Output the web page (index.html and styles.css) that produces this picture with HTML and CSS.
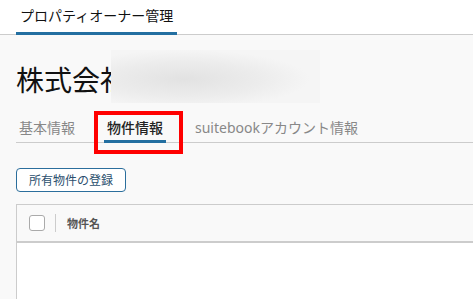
FILE: index.html
```html
<!DOCTYPE html>
<html lang="ja">
<head>
    <meta charset="UTF-8">
    <meta name="viewport" content="width=device-width, initial-scale=1.0">
    <title>プロパティオーナー管理</title>
    <link rel="stylesheet" href="styles.css">
</head>
<body>
    <div class="topbar">
        <div class="topbar-tab">プロパティオーナー管理</div>
    </div>

    <div class="content">
        <h1 class="owner-name">
            株式会社
            <span class="masked"></span>
        </h1>

        <div class="tabs">
            <div class="tab">基本情報</div>
            <div class="tab active">
                物件情報
                <span class="highlight"></span>
            </div>
            <div class="tab">suitebookアカウント情報</div>
        </div>

        <button type="button" class="btn">所有物件の登録</button>

        <div class="property-table">
            <div class="table-head">
                <div class="check-cell">
                    <span class="checkbox"></span>
                </div>
                <div class="col-name">物件名</div>
            </div>
            <div class="table-body"></div>
        </div>
    </div>
</body>
</html>
```

FILE: styles.css
```css
* {
    box-sizing: border-box;
    margin: 0;
    padding: 0;
    font-family: "Noto Sans", "Noto Sans CJK JP", sans-serif;
}

body {
    background-color: #f9f9f9;
    color: #222;
    overflow: hidden;
}

.topbar {
    display: flex;
    height: 35px;
    padding-left: 16px;
    background-color: #fff;
    border-bottom: 1px solid #ccc;
}

.topbar-tab {
    height: 35px;
    margin-bottom: -1px;
    padding: 0 4px;
    font-size: 14px;
    line-height: 32px;
    color: #111;
    border-bottom: 3px solid #236fa1;
}

.content {
    padding-left: 16px;
}

.owner-name {
    position: relative;
    margin-top: 25px;
    font-size: 28px;
    line-height: 40px;
    font-weight: normal;
    color: #111;
}

/* blurred-out company name */
.masked {
    position: absolute;
    left: 95px;
    top: -10px;
    width: 209px;
    height: 53px;
    background: radial-gradient(ellipse 60% 55% at 35% 55%, #e2e2e2, #ececec 60%, #f5f5f5 100%);
}

.tabs {
    display: flex;
    gap: 26px;
    height: 31px;
    margin-top: 12px;
    border-bottom: 1px solid #ccc;
}

.tab {
    position: relative;
    margin-bottom: -1px;
    padding: 3px 3px 0;
    font-size: 14px;
    line-height: 25px;
    color: #888;
    white-space: nowrap;
    border-bottom: 3px solid transparent;
}

.tab.active {
    color: #222;
    font-weight: 500;
    border-bottom-color: #236fa1;
}

.highlight {
    position: absolute;
    left: -10px;
    top: -1px;
    width: 89px;
    height: 43px;
    border: 4px solid #ff0000;
}

.btn {
    display: block;
    height: 24px;
    margin-top: 25px;
    padding: 0 12px;
    background-color: #fff;
    border: 1px solid #2b6e9c;
    border-radius: 4px;
    font-size: 12px;
    color: #2b4f6e;
}

.property-table {
    margin-top: 12px;
    border-top: 1px solid #ccc;
    border-left: 1px solid #ccc;
}

.table-head {
    display: flex;
    align-items: center;
    height: 38px;
    background-color: #f9f9f9;
    border-bottom: 2px solid #ccc;
}

.check-cell {
    display: flex;
    align-items: center;
    height: 18px;
    padding: 0 10px 0 12px;
    border-right: 1px solid #ccc;
}

.checkbox {
    width: 16px;
    height: 16px;
    background-color: #fff;
    border: 1px solid #aaa;
    border-radius: 3px;
}

.col-name {
    padding-left: 11px;
    font-size: 11px;
    font-weight: bold;
    color: #555;
}

.table-body {
    height: 56px;
    background-color: #fff;
}
```
